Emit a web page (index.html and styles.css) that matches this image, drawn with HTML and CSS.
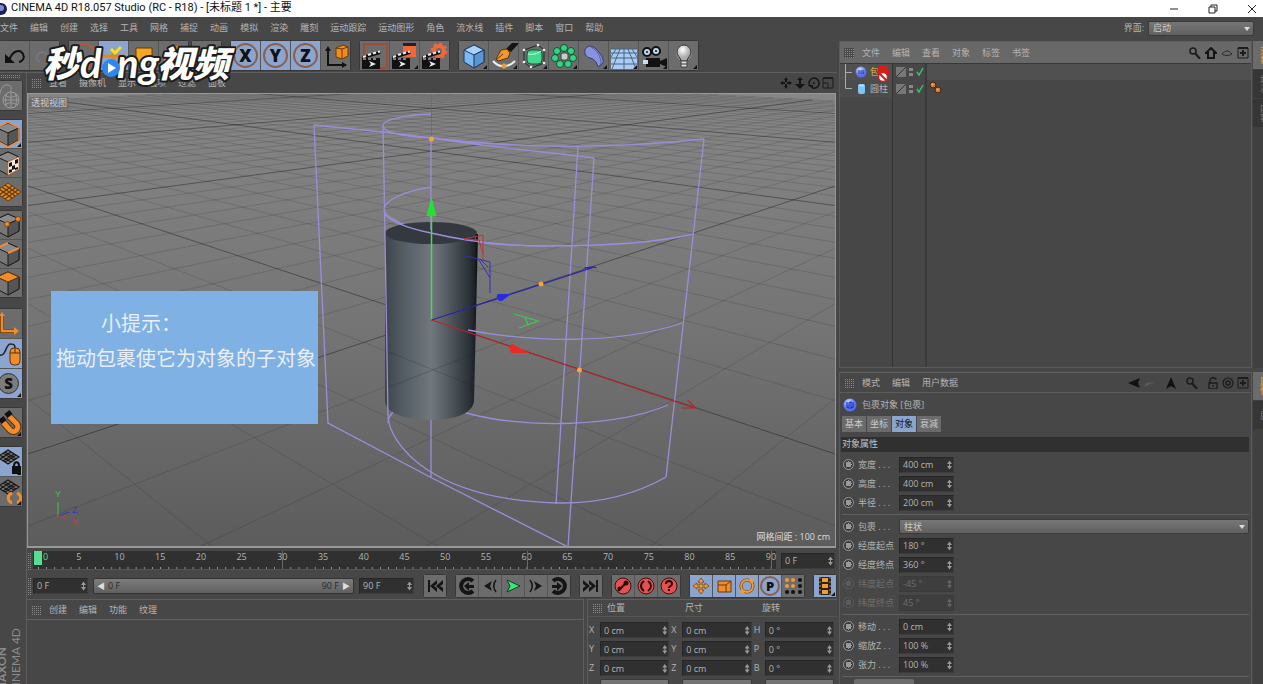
FILE: index.html
```html
<!DOCTYPE html>
<html lang="zh-CN">
<head>
<meta charset="utf-8">
<title>CINEMA 4D R18.057 Studio</title>
<link rel="stylesheet" href="styles.css">
</head>
<body>
<svg class="defs" aria-hidden="true">
  <defs>
    <g id="clap">
      <path d="M1 16h18v11H1z" fill="#111"/>
      <path d="M1 14 19 9l.5 3L2 17z" fill="#111"/>
      <path d="m2 15 3-1m2-1 3-1m2-.500 3-1m2-.500 2-.500" stroke="#eee" stroke-width="2"/>
      <path d="M2 17h3m2 0h3m2 0h3" stroke="#eee"/>
      <path d="m8 19 7 3-7 3 2-3z" fill="#eee"/>
    </g>
    <g id="graycube" stroke="#1c1c1c">
      <path d="m3 8 11-5 11 5v12l-11 6-11-6z" fill="#777"/>
      <path d="m3 8 11-5 11 5-11 5z" fill="#8a8a8a"/>
      <path d="m14 13 11-5v12l-11 6z" fill="#555"/>
    </g>
    <g id="mesh">
      <path d="M3 9 14 2l11 7-11 7z" fill="#777"/>
      <path d="M3 9 14 2l11 7-11 7zM6 7l11 7M9 5l11 7M11 4l11 7M6 11l11-7M9 13l11-7M11 14l11-7" stroke="#151515" stroke-width="1.200" fill="none"/>
    </g>
    <linearGradient id="backdrop" x1="0" y1="0" x2="0" y2="1">
      <stop offset="0" stop-color="#868686"/><stop offset=".5" stop-color="#757575"/><stop offset="1" stop-color="#5c5c5c"/>
    </linearGradient>
    <linearGradient id="steel">
      <stop offset="0" stop-color="#3c454c"/><stop offset=".15" stop-color="#4f585f"/><stop offset=".5" stop-color="#70787e"/><stop offset=".68" stop-color="#535b61"/><stop offset=".9" stop-color="#2b3238"/><stop offset=".96" stop-color="#1d2227"/><stop offset="1" stop-color="#0b0d0f"/>
    </linearGradient>
    <radialGradient id="ball" cx=".4" cy=".3"><stop offset="0" stop-color="#dbe3ff"/><stop offset="1" stop-color="#5670e6"/></radialGradient>
    <radialGradient id="bulb" cx=".4" cy=".3"><stop offset="0" stop-color="#fff"/><stop offset="1" stop-color="#aaa"/></radialGradient>
  </defs>
</svg>

<header class="titlebar">
  <svg class="app-icon" viewBox="0 0 8 12"><circle cx="1" cy="6" r="6" fill="#1d1f55"/><circle cx="1" cy="5" r="3" fill="#7d8bd8"/></svg>
  <h1>CINEMA 4D R18.057 Studio (RC - R18) - [未标题 1 *] - 主要</h1>
  <div class="window-buttons">
    <button aria-label="最小化"><svg viewBox="0 0 10 10"><path d="M1 5h8" stroke="#222"/></svg></button>
    <button aria-label="还原"><svg viewBox="0 0 10 10"><path d="M1 3h6v6H1zM3 3V1h6v6H7" stroke="#222" fill="none"/></svg></button>
    <button aria-label="关闭"><svg viewBox="0 0 10 10"><path d="m1 1 8 8M9 1 1 9" stroke="#222"/></svg></button>
  </div>
</header>

<nav class="menubar">
  <button>文件</button><button>编辑</button><button>创建</button><button>选择</button><button>工具</button><button>网格</button><button>捕捉</button><button>动画</button><button>模拟</button><button>渲染</button><button>雕刻</button><button>运动跟踪</button><button>运动图形</button><button>角色</button><button>流水线</button><button>插件</button><button>脚本</button><button>窗口</button><button>帮助</button>
  <div class="layout-choice"><label for="layout">界面:</label><span class="drop"><select id="layout"><option>启动</option></select></span></div>
</nav>

<main class="workspace">
  <section class="left">
    <div class="toolbar">
      <div class="group">
        <button aria-label="撤销"><svg viewBox="0 0 28 28"><path d="M8 19C11 8 19 7 22 12c2 4 0 7-4 8" fill="none" stroke="#111" stroke-width="2"/><path d="M4 12v9h10z" fill="#111"/></svg></button>
        <button aria-label="重做"><svg viewBox="0 0 28 28"><path d="M19 18C16 8 8 9 6 14c-1 3 0 5 3 6" fill="none" stroke="#777" stroke-width="2"/></svg></button>
      </div>
      <div class="group">
        <button aria-label="选择"><svg viewBox="0 0 28 28"><circle cx="14" cy="14" r="12" fill="none" stroke="#b4593a" stroke-width="2"/></svg></button>
        <button class="on" aria-label="移动"><svg viewBox="0 0 28 28"><path d="M14 8v18M2 14h24" stroke="#de8a20" stroke-width="3"/></svg></button>
        <button aria-label="缩放"><svg viewBox="0 0 28 28"><path d="M6 6h16v16H6z" fill="#f5a623" stroke="#703800"/></svg></button>
        <button aria-label="旋转"><svg viewBox="0 0 28 28"><circle cx="14" cy="14" r="9" fill="none" stroke="#de8a20" stroke-width="3"/></svg></button>
      </div>
      <div class="group tight">
        <button aria-label="最近工具"><svg viewBox="0 0 28 28"><path d="M14 4v20M4 14h20" stroke="#555" stroke-width="2"/></svg></button>
      </div>
      <div class="group">
        <button class="on axis" aria-label="X 轴"><span>X</span></button>
        <button class="on axis" aria-label="Y 轴"><span>Y</span></button>
        <button class="on axis" aria-label="Z 轴"><span>Z</span></button>
        <button aria-label="坐标系统"><svg viewBox="0 0 28 28"><path d="M6 8v15h15" fill="none" stroke="#111" stroke-width="2"/><path d="m6 4 3 5H3zM25 23l-5-3v6z" fill="#111"/><g stroke="#6d3900"><path d="m14 6 7-3 5 2v9l-6 3-6-2z" fill="#f08c1f"/><path d="m14 6 6 1 6-2M20 7v10" fill="none"/></g></svg></button>
      </div>
      <div class="group">
        <button aria-label="渲染视图"><svg viewBox="0 0 28 28"><path d="M3 2h23v24H3z" fill="none" stroke="#a04c35" stroke-width="2"/><use href="#clap"/></svg></button>
        <button class="more" aria-label="渲染到图片查看器"><svg viewBox="0 0 28 28"><path d="M12 3h13v12H12z" fill="#f0673d"/><path d="M12 1h13v3H12z" fill="#222"/><use href="#clap"/></svg></button>
        <button aria-label="渲染设置"><svg viewBox="0 0 28 28"><circle cx="18" cy="9" r="5" fill="none" stroke="#f0673d" stroke-width="4"/><circle cx="18" cy="9" r="7" fill="none" stroke="#f0673d" stroke-width="3" stroke-dasharray="2.750"/><use href="#clap"/></svg></button>
      </div>
      <div class="group">
        <button class="more" aria-label="立方体"><svg viewBox="0 0 28 28"><g stroke="#173a5c"><path d="m4 8 10-5 10 5v12l-10 6-10-6z" fill="#7db8ee"/><path d="m4 8 10-5 10 5-10 5z" fill="#a9d2fa"/><path d="m14 13 10-5v12l-10 6z" fill="#5a96d2"/></g></svg></button>
        <button class="more" aria-label="画笔"><svg viewBox="0 0 28 28"><path d="M16 7 22 1h7l-8 9z" fill="#151515"/><path d="m6 17 5-9 6-1 3 4-2 5-10 3z" fill="#f19a2b" stroke="#5a3205"/><path d="m6 18 7-6" stroke="#5a3205"/><path d="M3 19c6 7 15 7 22 0" fill="none" stroke="#eee" stroke-width="2"/><circle cx="14" cy="24" r="2.500" fill="#f19a2b"/></svg></button>
        <button class="more" aria-label="细分曲面"><svg viewBox="0 0 28 28"><path d="m4 8 14-5 6 5v13l-13 5-7-6z" fill="none" stroke="#222"/><rect x="7" y="8" width="15" height="14" rx="4" fill="#41d98c" stroke="#0f5a33"/><path d="M8 12c5 1 9 0 13-3" stroke="#d4ffe6" fill="none"/><g fill="#eee"><circle cx="4" cy="8" r="1.300"/><circle cx="18" cy="3" r="1.300"/><circle cx="24" cy="8" r="1.300"/><circle cx="24" cy="21" r="1.300"/><circle cx="11" cy="25" r="1.300"/><circle cx="4" cy="20" r="1.300"/></g></svg></button>
        <button class="more" aria-label="阵列"><svg viewBox="0 0 28 28"><g fill="#3bd184" stroke="#0d5730"><circle cx="14" cy="6" r="3.500"/><circle cx="21" cy="9" r="3.500"/><circle cx="23" cy="16" r="3.500"/><circle cx="18" cy="22" r="3.500"/><circle cx="10" cy="22" r="3.500"/><circle cx="5" cy="16" r="3.500"/><circle cx="7" cy="9" r="3.500"/></g><rect x="11" y="11" width="7" height="7" rx="2" fill="#ccc" stroke="#444"/></svg></button>
        <button class="more" aria-label="变形器"><svg viewBox="0 0 28 28"><path d="M5 8c2-5 7-5 11-1 5 5 8 10 7 14l-5 4c-2-7-5-8-8-9-4-1-6-4-5-8z" fill="#8793dd" stroke="#2d3670"/><path d="M11 5c7 4 10 10 10 17" fill="none" stroke="#535fb0"/></svg></button>
        <button class="more" aria-label="地面"><svg viewBox="0 0 28 28"><path d="M1 7h26v20H1z" fill="#a9cdf4"/><path d="M1 7h26M1 11h26M1 16h26M1 22h26M14 7v20M10 7 2 27M18 7l8 20M6 7l-5 8M22 7l5 8" stroke="#48637f"/></svg></button>
        <button class="more" aria-label="摄像机"><svg viewBox="0 0 28 28"><path d="M6 16h14v9H6zM20 19l7-3v9l-7-3z" fill="#111"/><g fill="#bcd7f4" stroke="#111" stroke-width="2"><circle cx="7" cy="10" r="4"/><circle cx="16" cy="9" r="4"/></g><circle cx="7" cy="10" r="1" fill="#111"/><circle cx="16" cy="9" r="1" fill="#111"/><path d="M3 18h5v4H3z" fill="#cde"/></svg></button>
        <button class="more" aria-label="灯光"><svg viewBox="0 0 28 28"><circle cx="14" cy="11" r="8" fill="#aaa" opacity=".5"/><path d="M11 19c0-3-4-5-4-9a7 7 0 0 1 14 0c0 4-4 6-4 9z" fill="url(#bulb)" stroke="#333"/><path d="M11 19h6v6h-6z" fill="#ddd" stroke="#444"/><path d="M11 22h6" stroke="#333"/></svg></button>
      </div>
    </div>

    <div class="stage">
      <aside class="palette">
        <i class="grip"></i>
        <div class="stack"><button class="dim" aria-label="转为可编辑"><svg viewBox="0 0 28 28"><g fill="none" stroke="#9a9a9a"><circle cx="17" cy="18" r="8"/><path d="M9 18h16M17 10v16M11 13c4 3 8 3 12 0M11 23c4-3 8-3 12 0M13 11c-2 5-2 10 0 14M21 11c2 5 2 10 0 14M5 20C5 8 9 2 14 3s3 6 2 7"/></g></svg></button></div>
        <div class="stack">
          <button class="on more" aria-label="模型"><svg viewBox="0 0 28 28"><use href="#graycube"/><path d="m3 8 11-6 11 6v13l-11 6-11-6z" fill="none" stroke="#f08c3c" stroke-width="1.500"/></svg></button>
          <button aria-label="纹理"><svg viewBox="0 0 28 28"><use href="#graycube"/><path d="m14 13 11-5v12l-11 6z" fill="#eee" stroke="#f08c3c"/><path d="m15 14 3-1v4l-3 1zM21 11l3-1v4l-3 1zM18 17l3-1v4l-3 1zM15 21l3-1v3l-3 1zM21 19l3-1v2l-3 1z" fill="#111"/></svg></button>
          <button aria-label="工作平面"><svg viewBox="0 0 28 28"><path d="m1 14 13-9 13 9-13 9z" fill="#e08a2b" stroke="#6b3b06"/><path d="m5 11 13 9M8 9l13 9M11 7l13 9M5 17l13-9M8 19l13-9M11 21l13-9" stroke="#6b3b06" stroke-width="1.500"/></svg></button>
        </div>
        <div class="stack">
          <button aria-label="点"><svg viewBox="0 0 28 28"><use href="#graycube"/><g fill="#f08c2c" stroke="#8a4a0c"><circle cx="13" cy="13" r="2.500"/><circle cx="24" cy="8" r="2.500"/></g></svg></button>
          <button aria-label="边"><svg viewBox="0 0 28 28"><use href="#graycube"/><path d="m14 13 11-5M3 8l11-5" stroke="#f08c3c" stroke-width="2"/></svg></button>
          <button aria-label="多边形"><svg viewBox="0 0 28 28"><use href="#graycube"/><path d="m3 8 11-5 11 5-11 5z" fill="#f08c2c" stroke="#6b3b06"/></svg></button>
        </div>
        <div class="stack">
          <button aria-label="启用轴心"><svg viewBox="0 0 28 28"><path d="M8 5v16h15" fill="none" stroke="#6b3b06" stroke-width="4"/><path d="M8 5v16h15" fill="none" stroke="#f08c2c" stroke-width="2.500"/><path d="m20 17 5 4-5 4zM5 6h6L8 2z" fill="#f08c2c"/></svg></button>
          <button class="on" aria-label="微调"><svg viewBox="0 0 28 28"><path d="M5 15c8 2 6-12 12-11 4 0 4 2 4 5" fill="none" stroke="#222" stroke-width="1.500"/><rect x="16" y="8" width="10" height="17" rx="4" fill="#f08c2c" stroke="#5a3205"/><path d="M16 13h10M21 8v5" stroke="#5a3205"/></svg></button>
          <button class="on more solo" aria-label="视窗独显"><span>S</span></button>
        </div>
        <div class="stack"><button class="more" aria-label="捕捉"><svg viewBox="0 0 28 28"><path d="m9 13 7 8c5 5 11-3 6-7l-7-7" fill="none" stroke="#5a3205" stroke-width="7"/><path d="m9 13 7 8c5 5 11-3 6-7l-7-7" fill="none" stroke="#f08c2c" stroke-width="5"/><path d="m6 13 5-4M12 7l5-4" stroke="#111" stroke-width="5"/></svg></button></div>
        <div class="stack">
          <button class="on more" aria-label="锁定工作平面"><svg viewBox="0 0 28 28"><use href="#mesh"/><path d="M18 18h9v8h-9z" fill="#111"/><path d="M20 18c0-5 5-5 5 0" fill="none" stroke="#111" stroke-width="2"/></svg></button>
          <button class="more" aria-label="对齐工作平面"><svg viewBox="0 0 28 28"><use href="#mesh"/><path d="M18 15c-5 2-5 8 0 10M23 15c5 2 5 8 0 10" fill="none" stroke="#f08c2c" stroke-width="3"/></svg></button>
        </div>
        <div class="brand"><b>MAXON</b><span>CINEMA 4D</span></div>
      </aside>

      <div class="center">
        <nav class="panel-menu view-menu">
          <i class="grip"></i><button>查看</button><button>摄像机</button><button>显示</button><button>选项</button><button>过滤</button><button>面板</button>
          <div class="tools">
            <svg viewBox="0 0 12 12"><path d="M6 0 8 3H4zM6 12l2-3H4zM0 6l3-2v4zM12 6 9 4v4zM5 3h2v2H5zM5 7h2v2H5zM3 5h2v2H3zM7 5h2v2H7z" fill="#151515"/></svg>
            <svg viewBox="0 0 12 12"><path d="m6 0 3 3H7v4h4l-5 5-5-5h4V3H3z" fill="#151515"/></svg>
            <svg viewBox="0 0 12 12"><path d="M2 9a5 5 0 1 1 3 2M6 5v2" fill="none" stroke="#151515" stroke-width="1.500"/><path d="M0 8h5v4z" fill="#151515"/></svg>
            <svg viewBox="0 0 12 12"><path d="M1 1h10v10H1zM1 6h5v5" fill="none" stroke="#1c1c1c"/><path d="M1 1h10" stroke="#1c1c1c" stroke-width="2"/></svg>
          </div>
        </nav>
        <div class="viewport">
          <svg class="scene" viewBox="27 94 809 452" preserveAspectRatio="xMidYMid slice">
            <rect x="-400" y="94" width="1700" height="452" fill="url(#backdrop)"/>
            <g fill="none" stroke="#000">
              <path id="grid-minor" stroke-opacity=".16" stroke-width=".8"/>
              <path id="grid-major" stroke-opacity=".4" stroke-width=".9"/>
            </g>
            <g fill="none" stroke="#9c8ddb" stroke-width="1.300">
              <path d="M431 187C405 191 384 200 384 210c2 12 60 36 162 36 60 0 110-3 147-12"/>
              <path d="M388 417c2 26 42 84 174 86 40 0 76-10 104-26"/>
              <path d="M431 411v66M394 411c-3 3-6 6-6 12"/>
            </g>
            <path d="M385 234v168c2 12 22 18 46 18s42-7 43-19l4-167z" fill="url(#steel)"/>
            <ellipse cx="431" cy="233" rx="46" ry="11" fill="#33393f"/>
            <path d="m389 352 84 34M476 353l-87 34" stroke="#222" stroke-opacity=".25"/>
            <g fill="none" stroke="#9c8ddb" stroke-width="1.300">
              <path d="M431 114c-26 1-50 6-48 12 2 8 28 11 48 12M314 125c40 4 80 8 117 13 60 9 105 13 163 20M431 138c100 12 190 10 273 1"/>
              <path d="m314 125 14 298 102 54 138 70 26-389M704 139l-38 338M578 146l-22 358M383 126l2 110 3 181M431 138v92"/>
              <path d="M384 212c2 8 22 16 47 21 34 8 70 13 115 13M468 330c60 12 150 15 214-7M466 413c60 16 150 14 202-8"/>
            </g>
            <path d="M431.500 94v44" stroke="#26952b" stroke-opacity=".7"/>
            <path d="M431.500 320V212" stroke="#4fd65a" stroke-width="1.500"/>
            <path d="m431.500 197 5 19h-10z" fill="#25df32"/>
            <path d="m431.500 320 163-53-10 1m10-1 2 1" stroke="#2925a4" stroke-width="1.300" fill="none"/>
            <path d="m511 294-13 0c-3 3 0 8 4 7z" fill="#2a2ae0"/>
            <path d="m431.500 320 263 88m-13 0 14 0-8-8" stroke="#b82427" stroke-width="1.200" fill="none"/>
            <path d="m529 353-17-9c-4 2-3 8 0 9z" fill="#ed2828"/>
            <path d="m464 239 19-4v25M464 239l15 1 4 14M475 236l1 5" stroke="#c63035" fill="none"/>
            <path d="m466 256 24 6v31M479 260l11 18M480 259l8 8" stroke="#3430b8" fill="none"/>
            <path d="m514 314 24 7-19 7M525 317l3 8" stroke="#43c94c" stroke-width="1.200" fill="none"/>
            <g fill="#f2a53a"><circle cx="431.500" cy="139" r="2.500"/><circle cx="541" cy="284" r="2.500"/><circle cx="579.500" cy="370" r="2.500"/></g>
            <path d="M58 516v-14" stroke="#3fc648"/><path d="m58 516 11-4" stroke="#3734c8"/><path d="m58 516 10 4" stroke="#c63c3c"/>
            <g class="gizmo"><text x="55" y="497" fill="#3fc648">Y</text><text x="72" y="513" fill="#3734c8">Z</text><text x="72" y="525" fill="#c63c3c">X</text></g>
          </svg>
          <span class="view-name">透视视图</span>
          <span class="spacing">网格间距 : 100 cm</span>
          <div class="tip"><p class="tip-head">小提示：</p><p>拖动包裹使它为对象的子对象</p></div>
        </div>

        <div class="timeline">
          <i class="grip"></i>
          <div class="ruler">
            <div class="marks"><span class="now">0</span><span>5</span><span>10</span><span>15</span><span>20</span><span>25</span><span class="major">30</span><span>35</span><span>40</span><span>45</span><span>50</span><span>55</span><span class="major">60</span><span>65</span><span>70</span><span>75</span><span>80</span><span>85</span><span class="major">90</span></div>
          </div>
          <span class="num"><input aria-label="当前帧" value="0 F"></span>
        </div>

        <div class="transport">
          <i class="grip"></i>
          <span class="num"><input aria-label="起始帧" value="0 F"></span>
          <div class="range"><button>◀</button><span>0 F</span><span class="end">90 F</span><button>▶</button></div>
          <span class="num"><input aria-label="结束帧" value="90 F"></span>
          <div class="group small"><button aria-label="转到开始"><svg viewBox="0 0 22 22"><path d="M4 5h2v12H4zM13 5v4l-3 2 3 2v4l-7-6zM19 5v4l-3 2 3 2v4l-7-6z" fill="#151515"/></svg></button></div>
          <div class="group small">
            <button aria-label="上一关键帧"><svg viewBox="0 0 22 22"><path d="M17 6a7 7 0 1 0 0 10" fill="none" stroke="#151515" stroke-width="4"/><path d="m8 11 5-4v3h5v3h-5v3z" fill="#151515"/></svg></button>
            <button aria-label="上一帧"><svg viewBox="0 0 22 22"><path d="m13 6-2 5 2 5-8-5z" fill="#151515"/><path d="M17 5c-3 4-3 8 0 12" fill="none" stroke="#151515" stroke-width="1.500"/></svg></button>
            <button aria-label="播放"><svg viewBox="0 0 22 22"><path d="m5 5 13 6-13 6 3-6z" fill="#36e67c" stroke="#0b3d1e"/></svg></button>
            <button aria-label="下一帧"><svg viewBox="0 0 22 22"><path d="m9 6 2 5-2 5 8-5z" fill="#151515"/><path d="M5 5c3 4 3 8 0 12" fill="none" stroke="#151515" stroke-width="1.500"/></svg></button>
            <button aria-label="下一关键帧"><svg viewBox="0 0 22 22"><path d="M5 6a7 7 0 1 1 0 10" fill="none" stroke="#151515" stroke-width="4"/><path d="M14 11 9 7v3H4v3h5v3z" fill="#151515"/></svg></button>
          </div>
          <div class="group small"><button aria-label="转到结束"><svg viewBox="0 0 22 22"><path d="M16 5h2v12h-2zM9 5v4l3 2-3 2v4l7-6zM3 5v4l3 2-3 2v4l7-6z" fill="#151515"/></svg></button></div>
          <div class="group small">
            <button aria-label="记录关键帧"><svg viewBox="0 0 22 22"><circle cx="11" cy="11" r="8" fill="#e35151" stroke="#3b1010"/><path d="m6 16 8-8" stroke="#2b0808" stroke-width="2"/><circle cx="14" cy="8" r="2.500" fill="#2b0808"/><circle cx="7.500" cy="13.500" r="2" fill="#2b0808"/></svg></button>
            <button aria-label="自动关键帧"><svg viewBox="0 0 22 22"><circle cx="11" cy="11" r="8" fill="#e35151" stroke="#3b1010"/><path d="M9 6c-4 3-4 7 0 10M13 6c4 3 4 7 0 10" stroke="#2b0808" stroke-width="2" fill="none"/></svg></button>
            <button aria-label="关键帧选集"><svg viewBox="0 0 22 22"><circle cx="11" cy="11" r="8" fill="#e35151" stroke="#3b1010"/><path d="M8 9c0-4 6-4 6 0 0 2-3 2-3 4m0 1v2" stroke="#2b0808" stroke-width="2" fill="none"/></svg></button>
          </div>
          <div class="group small">
            <button class="on" aria-label="位置"><svg viewBox="0 0 22 22"><path d="m11 3 3 4h-2v3h3V8l4 3-4 3v-2h-3v3h2l-3 4-3-4h2v-3H7v2l-4-3 4-3v2h3V7H8z" fill="#f29b36" stroke="#6b3b06" stroke-width=".7"/></svg></button>
            <button class="on" aria-label="缩放"><svg viewBox="0 0 22 22"><path d="M5 6h13v11H5z" fill="#f08c2c" stroke="#6b3b06"/><path d="M5 10h8v7M13 10l5-4" stroke="#6b3b06" fill="none"/></svg></button>
            <button class="on" aria-label="旋转"><svg viewBox="0 0 22 22"><circle cx="11" cy="11" r="6" fill="none" stroke="#6b3b06" stroke-width="3"/><circle cx="11" cy="11" r="6" fill="none" stroke="#f29b36" stroke-width="1.800"/><path d="m13 3 5 1-2 5zM9 19l-5-1 2-5z" fill="#f29b36"/></svg></button>
            <button class="on axis" aria-label="参数"><span>P</span></button>
            <button aria-label="点级别"><svg viewBox="0 0 22 22"><g fill="#f29b36"><circle cx="5" cy="5" r="2"/><circle cx="11" cy="5" r="2"/><circle cx="5" cy="11" r="2"/><circle cx="11" cy="11" r="2"/></g><g fill="#111"><circle cx="18" cy="5" r="2"/><circle cx="18" cy="11" r="2"/><circle cx="5" cy="17" r="2"/><circle cx="11" cy="17" r="2"/><circle cx="18" cy="17" r="2"/></g></svg></button>
          </div>
          <div class="group small"><button class="on more" aria-label="时间线"><svg viewBox="0 0 22 22"><path d="M5 2h12v18H5z" fill="#2b2115"/><path d="M8 3h6v4H8zM8 9h6v4H8zM8 15h6v4H8z" fill="#f29b36"/><path d="M6 2v18M16 2v18" stroke="#9a8872" stroke-dasharray="2 2"/></svg></button></div>
        </div>

        <div class="lower">
          <section class="materials">
            <nav class="panel-menu"><i class="grip"></i><button>创建</button><button>编辑</button><button>功能</button><button>纹理</button></nav>
          </section>
          <section class="coords">
            <div class="coords-head"><i class="grip"></i><span>位置</span><span>尺寸</span><span>旋转</span></div>
            <div class="coords-grid">
              <label for="px">X</label><span class="num"><input id="px" value="0 cm"></span><label for="sx">X</label><span class="num"><input id="sx" value="0 cm"></span><label for="rh">H</label><span class="num"><input id="rh" value="0 °"></span>
              <label for="py">Y</label><span class="num"><input id="py" value="0 cm"></span><label for="sy">Y</label><span class="num"><input id="sy" value="0 cm"></span><label for="rp">P</label><span class="num"><input id="rp" value="0 °"></span>
              <label for="pz">Z</label><span class="num"><input id="pz" value="0 cm"></span><label for="sz">Z</label><span class="num"><input id="sz" value="0 cm"></span><label for="rb">B</label><span class="num"><input id="rb" value="0 °"></span>
              <i></i><span class="drop"></span><i></i><span class="drop"></span><i></i><span class="drop"></span>
            </div>
          </section>
        </div>
      </div>
    </div>
  </section>

  <section class="right">
    <div class="dock objects">
      <div class="panel">
        <nav class="panel-menu bright">
          <i class="grip"></i><button>文件</button><button>编辑</button><button>查看</button><button>对象</button><button>标签</button><button>书签</button>
          <div class="tools">
            <svg viewBox="0 0 12 12"><circle cx="4" cy="4" r="3" fill="none" stroke="#1c1c1c" stroke-width="1.500"/><path d="m6 6 5 6" stroke="#1c1c1c" stroke-width="2"/></svg>
            <svg viewBox="0 0 12 12"><path d="M6 1 1 6h2v5h6V6h2z" fill="none" stroke="#151515" stroke-width="2"/></svg>
            <svg viewBox="0 0 12 12"><path d="M1 7c3-4 7-4 10 0-3 2-7 2-10 0z" fill="none" stroke="#2b2b2b"/></svg>
            <svg viewBox="0 0 12 12"><path d="M1 1h10v10H1z" fill="none" stroke="#1c1c1c"/><path d="M1 1h10M6 3v6M3 6h6" stroke="#1c1c1c" stroke-width="2"/></svg>
          </div>
        </nav>
        <div class="tree">
          <div class="row lit">
            <div class="name"><svg class="branch" viewBox="0 0 12 17"><path d="M5.500 0v17M6 8.500h6" stroke="#aaa" fill="none"/></svg><svg class="kind" viewBox="0 0 12 12"><circle cx="6" cy="6" r="5.500" fill="url(#ball)"/><path d="M4 4v4M6 4v4M8 4v4" stroke="#1b2c9b"/></svg><span class="picked">包裹</span>
              <svg class="deny" viewBox="0 0 14 18"><ellipse cx="7" cy="7" rx="6" ry="7" fill="#d81b1b"/><circle cx="7" cy="12" r="4.500" fill="#fff" stroke="#d81b1b" stroke-width="1.500"/><path d="m4 9 6 6" stroke="#d81b1b" stroke-width="2"/></svg></div>
            <div class="flags"><i class="layer"></i><i class="dots"></i><svg viewBox="0 0 8 10"><path d="m1 5 2 3 4-7" stroke="#35c36b" stroke-width="1.500" fill="none"/></svg></div>
            <div class="tags"></div>
          </div>
          <div class="row">
            <div class="name"><svg class="branch" viewBox="0 0 12 17"><path d="M5.500 0v8.500H12" stroke="#aaa" fill="none"/></svg><svg class="kind" viewBox="0 0 12 12"><rect x="3" y="1" width="7" height="10" rx="2" fill="#7cc4f5"/><ellipse cx="6.500" cy="2.500" rx="3" ry="1" fill="#b9e0fb"/></svg><span>圆柱</span></div>
            <div class="flags"><i class="layer"></i><i class="dots"></i><svg viewBox="0 0 8 10"><path d="m1 5 2 3 4-7" stroke="#35c36b" stroke-width="1.500" fill="none"/></svg></div>
            <div class="tags"><svg viewBox="0 0 14 14"><circle cx="4" cy="4" r="3" fill="#c87a35" stroke="#43260c"/><circle cx="9" cy="9" r="3" fill="#c87a35" stroke="#43260c"/><circle cx="3.500" cy="3.500" r="1" fill="#f0b880"/><circle cx="8.500" cy="8.500" r="1" fill="#f0b880"/></svg></div>
          </div>
          <div class="row rest"><div class="name"></div><div class="flags"></div><div class="tags"></div></div>
        </div>
      </div>
      <div class="tabs"><button class="current">对象</button><button>场次</button><button>内容</button></div>
    </div>

    <div class="dock attributes">
      <div class="panel">
        <nav class="panel-menu">
          <i class="grip"></i><button>模式</button><button>编辑</button><button>用户数据</button>
          <div class="tools">
            <svg class="wide" viewBox="0 0 28 12"><path d="m0 6 12-5-2 5 2 5z" fill="#111"/><path d="m16 10 11-5-9 1z" fill="#5c5c5c"/></svg>
            <svg class="apart" viewBox="0 0 12 12"><path d="m6 0 5 12-5-3-5 3z" fill="#111"/></svg>
            <svg class="apart" viewBox="0 0 12 12"><circle cx="4" cy="4" r="3" fill="none" stroke="#1c1c1c" stroke-width="1.500"/><path d="m6 6 5 6" stroke="#1c1c1c" stroke-width="2"/></svg>
            <svg class="apart" viewBox="0 0 12 12"><path d="M2 6h8v6H2zM3 6V3c0-3 6-3 6 0M6 8v2" fill="none" stroke="#1c1c1c" stroke-width="1.300"/></svg>
            <svg viewBox="0 0 12 12"><circle cx="6" cy="6" r="5" fill="none" stroke="#1c1c1c" stroke-width="1.200"/><circle cx="6" cy="6" r="2" fill="none" stroke="#1c1c1c" stroke-width="1.500"/></svg>
            <svg viewBox="0 0 12 12"><path d="M1 1h10v10H1z" fill="none" stroke="#1c1c1c"/><path d="M1 1h10M6 3v6M3 6h6" stroke="#1c1c1c" stroke-width="2"/></svg>
          </div>
        </nav>
        <div class="attr-title"><svg viewBox="0 0 14 14"><circle cx="7" cy="7" r="6.500" fill="url(#ball)"/><path d="M4 4v5l2 1V5l2-1v6l2-1V4" stroke="#1b35d0" stroke-width="1.300" fill="none"/></svg><span>包裹对象 [包裹]</span></div>
        <div class="attr-tabs"><button>基本</button><button>坐标</button><button class="on">对象</button><button>衰减</button></div>
        <h2>对象属性</h2>
        <div class="fields">
          <div class="field"><input type="radio" aria-label="宽度关键帧"><label for="w">宽度 . . .</label><span class="num"><input id="w" value="400 cm"></span></div>
          <div class="field"><input type="radio" aria-label="高度关键帧"><label for="h">高度 . . .</label><span class="num"><input id="h" value="400 cm"></span></div>
          <div class="field"><input type="radio" aria-label="半径关键帧"><label for="r">半径 . . .</label><span class="num"><input id="r" value="200 cm"></span></div>
          <hr>
          <div class="field"><input type="radio" aria-label="包裹关键帧"><label for="wrap">包裹 . . .</label><span class="drop"><select id="wrap"><option>柱状</option></select></span></div>
          <div class="field"><input type="radio" aria-label="经度起点关键帧"><label for="lo1">经度起点</label><span class="num"><input id="lo1" value="180 °"></span></div>
          <div class="field"><input type="radio" aria-label="经度终点关键帧"><label for="lo2">经度终点</label><span class="num"><input id="lo2" value="360 °"></span></div>
          <div class="field off"><input type="radio" disabled aria-label="纬度起点关键帧"><label for="la1">纬度起点</label><span class="num"><input id="la1" value="-45 °" disabled></span></div>
          <div class="field off"><input type="radio" disabled aria-label="纬度终点关键帧"><label for="la2">纬度终点</label><span class="num"><input id="la2" value="45 °" disabled></span></div>
          <hr>
          <div class="field"><input type="radio" aria-label="移动关键帧"><label for="mv">移动 . . .</label><span class="num"><input id="mv" value="0 cm"></span></div>
          <div class="field"><input type="radio" aria-label="缩放Z关键帧"><label for="zz">缩放Z . .</label><span class="num"><input id="zz" value="100 %"></span></div>
          <div class="field"><input type="radio" aria-label="张力关键帧"><label for="tn">张力 . . .</label><span class="num"><input id="tn" value="100 %"></span></div>
          <hr>
          <button class="fit" aria-label="匹配到父级"></button>
        </div>
      </div>
      <div class="tabs"><button class="current">属性</button><button>层</button></div>
    </div>
  </section>
</main>

<svg class="watermark" viewBox="0 0 196 52" role="img" aria-label="秒dong视频">
  <g class="wm-text">
    <text class="wm-han" x="3" y="34">秒</text>
    <text class="wm-latin" x="40" y="35">d</text>
    <text class="wm-latin" x="77" y="35">ng</text>
    <text class="wm-han" x="117" y="34">视频</text>
  </g>
  <circle cx="71" cy="25" r="9" fill="#2f86ee"/>
  <path d="m68 20 8 5-8 5z" fill="#fff"/>
  <path d="m71 6 4 4 6-6" fill="none" stroke="#f6e11c" stroke-width="3"/>
</svg>
<script src="grid.js"></script>
</body>
</html>
```
FILE: grid.js
```js
// Ground plane in perspective: a runs along the red axis, b along the blue one, one unit per 100 cm.
const CENTER = 431.5, HORIZON = 36, DEPTH = 6.824, RISE = 1938, SPREAD = 855.5, FAR = 37, NEAR = 0.6;

const depth = (a, b) => DEPTH - (a - b) / 2;

function project(a, b) {
  const w = depth(a, b);
  return (CENTER + SPREAD * (a + b) / 2 / w).toFixed(1) + ' ' + (HORIZON + RISE / w).toFixed(1);
}

const paths = { minor: '', major: '' };
for (let n = -FAR; n <= FAR; n++) {
  const kind = n % 10 === 0 ? 'major' : 'minor';
  const aEnd = Math.min(FAR, 2 * (DEPTH - NEAR) + n);
  if (aEnd > -FAR) paths[kind] += `M${project(-FAR, n)}L${project(aEnd, n)}`;
  const bStart = Math.max(-FAR, n - 2 * (DEPTH - NEAR));
  if (bStart < FAR) paths[kind] += `M${project(n, bStart)}L${project(n, FAR)}`;
}
document.getElementById('grid-minor').setAttribute('d', paths.minor);
document.getElementById('grid-major').setAttribute('d', paths.major);
```
FILE: styles.css
```css
* { box-sizing: border-box; }
html, body { height: 100%; }
body {
  margin: 0; display: flex; flex-direction: column; overflow: hidden;
  background: #474747; color: #b4b4b4;
  font: 9px/12px "Open Sans", "Noto Sans CJK SC", sans-serif;
}
button, input, select { font: inherit; color: inherit; border: 0; padding: 0; margin: 0; background: none; }
svg { display: block; flex: none; }
.defs { position: absolute; width: 0; height: 0; }
p, h1, h2 { margin: 0; font-weight: 400; }

.titlebar { flex: none; display: flex; align-items: center; height: 17px; background: #fff; color: #111; }
.app-icon { width: 8px; height: 12px; margin-right: 3px; }
.titlebar h1 { font: 11px/14px Roboto, "Noto Sans CJK SC", sans-serif; padding-bottom: 1px; }
.window-buttons { margin-left: auto; display: flex; gap: 29px; padding-right: 6px; }
.window-buttons button, .window-buttons svg { width: 10px; height: 10px; }

.menubar { flex: none; display: flex; align-items: center; gap: 12px; height: 22px; padding-right: 9px; }
.menubar button { white-space: nowrap; }
.layout-choice { margin-left: auto; display: flex; align-items: center; gap: 4px; }
.layout-choice .drop { width: 106px; }

.drop { position: relative; display: block; height: 15px; border-radius: 2px; background: linear-gradient(#777, #606060); border: 1px solid #3a3a3a; }
.drop select { appearance: none; display: block; width: 100%; height: 13px; padding-left: 4px; line-height: 12px; color: #ccc; }
.drop:has(select)::after { content: ""; position: absolute; right: 3px; top: 5px; border: 3px solid transparent; border-top: 4px solid #ddd; border-bottom: 0; }

.workspace { flex: 1; min-height: 0; display: flex; gap: 2px; }
.left { flex: 1; min-width: 0; display: flex; flex-direction: column; }
.right { flex: 0 0 424px; display: flex; flex-direction: column; gap: 4px; padding-top: 2px; }

.toolbar { flex: none; display: flex; gap: 10px; height: 34px; padding-top: 2px; border-bottom: 1px solid #5e5e5e; }
.group { display: flex; gap: 1px; height: 29px; background: #555; border-radius: 3px; box-shadow: 0 0 0 1px #383838; }
.group.tight { margin-left: -6px; }
.group button { position: relative; width: 29px; background: #6c6c6c; display: flex; align-items: center; justify-content: center; }
.group svg { width: 28px; height: 28px; }
.group button.on, .stack button.on { background: #8ca5cf; }
.more::after { content: ""; position: absolute; right: 1px; bottom: 1px; border: 2px solid; border-color: transparent #111 #111 transparent; }
.axis span { display: block; width: 25px; height: 25px; border: 2px solid #8c5f4b; border-radius: 50%; color: #111; font: 800 17px/21px "Open Sans", sans-serif; }

.group.small { height: 22px; }
.group.small button { width: 22px; }
.group.small svg { width: 22px; height: 22px; }
.small .axis span { width: 20px; height: 20px; font-size: 13px; line-height: 16px; }

.stage { flex: 1; min-height: 0; display: flex; }
.palette { flex: 0 0 26px; display: flex; flex-direction: column; overflow: hidden; position: relative; }
.palette > .grip { width: 20px; height: 4px; margin: 1px 0 3px; }
.stack { flex: none; width: 22px; display: flex; flex-direction: column; gap: 1px; margin-bottom: 10px; background: #555; box-shadow: 0 0 0 1px #383838; border-radius: 0 3px 3px 0; }
.stack:nth-of-type(2) { margin-bottom: 5px; }
.stack:nth-of-type(3) { margin-bottom: 12px; }
.stack button { position: relative; height: 29px; overflow: hidden; background: #6c6c6c; display: flex; justify-content: flex-end; align-items: center; }
.stack:nth-of-type(2) button, .stack:nth-of-type(3) button { height: 28px; }
.stack svg { width: 28px; height: 28px; }
.solo span { flex: none; width: 21px; height: 21px; margin-right: 3px; border-radius: 50%; border: 1px solid #333; background: #7c7c7c; color: #111; font: 800 15px/19px "Open Sans", sans-serif; }
.brand { position: absolute; left: 0; bottom: 0; display: flex; align-items: flex-end; height: 57px; color: #8b8b8b; }
.brand b, .brand span { writing-mode: vertical-rl; transform: rotate(180deg); white-space: nowrap; font: 700 12px/12px Lato, sans-serif; margin-bottom: -9px; }
.brand b { margin-left: -4px; }
.brand span { font-weight: 400; margin-left: 2px; }

.grip { flex: none; width: 10px; height: 10px; background: repeating-linear-gradient(#474747 0 1px, transparent 1px 2px), repeating-linear-gradient(90deg, #474747 0 1px, #8a8a8a 1px 2px); }

.center { flex: 1; min-width: 0; display: flex; flex-direction: column; border-left: 1px solid #5c5c5c; }
.panel-menu { flex: none; display: flex; align-items: center; gap: 12px; height: 20px; padding-left: 4px; }
.panel-menu .grip { margin-right: -4px; }
.panel-menu button { white-space: nowrap; }
.tools { margin-left: auto; display: flex; gap: 4px; padding-right: 2px; }
.tools svg { width: 12px; height: 12px; }
.view-menu .tools { gap: 2px; padding-right: 3px; }

.viewport { flex: 1; min-height: 0; position: relative; overflow: hidden; margin-right: 1px; border: 1px solid #989898; border-bottom-width: 2px; }
.scene { position: absolute; inset: 0; width: 100%; height: 100%; }
.gizmo { font: 9px "Liberation Sans", sans-serif; }
.view-name, .spacing { position: absolute; padding: 0 2px; background: #5e5e5eb0; color: #ddd; }
.view-name { left: 1px; top: 3px; background: #66666699; color: #cfcfcf; }
.spacing { right: 3px; bottom: 3px; }
.tip { position: absolute; left: 23px; top: 197px; width: 267px; height: 133px; padding: 14px 0 0 5px; background: #7fb1e5; color: #e9eff6; font: 700 20px/35px "Noto Sans CJK SC", sans-serif; white-space: nowrap; }
.tip-head { padding-left: 45px; }

.timeline { flex: none; display: flex; align-items: center; height: 25px; padding: 1px 2px 1px 0; }
.timeline > .grip, .transport > .grip { width: 5px; height: 18px; margin-right: 1px; }
.ruler { flex: 1; height: 19px; background: #303030; padding: 0 5px; border-bottom: 1px solid #555; }
.marks { position: relative; height: 18px; display: flex; justify-content: space-between; background: linear-gradient(90deg, #999 1px, transparent 1px) 0 100% / calc(100% / 90) 2px repeat-x; }
.marks span { position: relative; width: 0; display: flex; justify-content: center; }
.marks .now { color: #4fdf8b; justify-content: flex-start; text-indent: 5px; }
.marks .now::before { content: ""; position: absolute; left: -4px; top: 0; width: 8px; height: 14px; background: #55df90; }
.marks .major::after { content: ""; position: absolute; top: 0; left: 0; width: 1px; height: 18px; background: #6a6a6a; }
.timeline .num { width: 54px; margin-left: 5px; }

.num { position: relative; display: block; height: 16px; background: #303030; border: 1px solid #3c3c3c; border-top-color: #262626; border-left-color: #262626; }
.num input { display: block; width: 100%; height: 14px; padding-left: 3px; outline: 0; }
.num::after { content: ""; position: absolute; right: 1px; top: 3px; width: 5px; height: 9px; background: #999; clip-path: polygon(50% 0, 100% 38%, 60% 38%, 60% 62%, 100% 62%, 50% 100%, 0 62%, 40% 62%, 40% 38%, 0 38%); }

.transport { flex: none; display: flex; align-items: center; height: 25px; gap: 10px; padding-right: 1px; }
.transport > .grip { margin-right: -9px; }
.transport .num { width: 55px; flex: none; }
.transport .range { flex: 1; min-width: 0; display: flex; align-items: center; gap: 3px; height: 16px; margin: 0 -5px; padding: 0 3px; background: linear-gradient(#7c7c7c, #606060); border: 1px solid #333; border-radius: 2px; color: #2a2a2a; }
.range button { color: #ddd; font-size: 8px; }
.range .end { margin-left: auto; }

.lower { flex: none; display: flex; gap: 3px; height: 86px; overflow: hidden; padding-top: 1px; }
.materials { flex: 1; border-top: 1px solid #5e5e5e; border-right: 1px solid #5e5e5e; }
.materials .panel-menu { border-bottom: 1px solid #606060; }
.coords { flex: 0 0 250px; border-top: 1px solid #5e5e5e; border-left: 1px solid #5e5e5e; }
.coords-head { display: grid; grid-template-columns: 15px 78px 77px 1fr; align-items: center; height: 17px; padding-left: 4px; border-bottom: 1px solid #555; }
.coords-grid { display: grid; grid-template-columns: 9px 1fr 9px 1fr 9px 1fr; column-gap: 2px; row-gap: 3px; align-items: center; padding: 5px 3px 0 1px; }

.dock { display: flex; gap: 1px; min-height: 0; }
.objects { flex: 0 0 327px; }
.attributes { flex: 1; }
.panel { flex: 1; min-width: 0; display: flex; flex-direction: column; border: 1px solid #5a5a5a; border-top-color: #606060; overflow: hidden; }
.panel > * { flex: none; }
.attributes .panel { border-bottom: 0; }
.bright { background: #686868; height: 21px; }
.attributes .panel-menu { border-bottom: 1px solid #5c5c5c; }
.tools .wide { width: 28px; }
.attributes .tools { gap: 3px; }
.tools .apart { margin-left: 6px; }

.panel > .tree { flex: 1; display: flex; flex-direction: column; border-top: 1px solid #383838; }
.row { display: flex; height: 17px; }
.row.lit { height: 16px; }
.row.lit .name, .row.lit .tags { background: #505050; }
.row.rest { flex: 1; }
.name { position: relative; flex: 0 0 52px; display: flex; align-items: center; gap: 2px; background: #4c4c4c; white-space: nowrap; }
.rest .name { background: none; }
.branch { width: 12px; height: 17px; }
.kind { width: 12px; height: 12px; margin-left: 1px; }
.name span { margin-left: 1px; }
.picked { color: #e8c23c; }
.deny { position: absolute; left: 36px; top: 1px; width: 14px; height: 18px; z-index: 1; }
.flags { flex: 0 0 35px; display: flex; align-items: center; gap: 3px; padding-left: 3px; border-left: 1px solid #333; border-right: 2px solid #3a3a3a; }
.flags svg { width: 8px; height: 10px; }
.layer { flex: none; width: 10px; height: 10px; background: linear-gradient(135deg, #777 46%, #333 46% 54%, #777 54%); }
.dots { flex: none; width: 4px; height: 10px; background: radial-gradient(circle, #888 2px, transparent 2px) 0 0 / 4px 5px; }
.tags { flex: 1; padding: 1px 0 0 2px; }
.tags svg { width: 14px; height: 14px; }

.tabs { flex: 0 0 10px; display: flex; flex-direction: column; gap: 1px; overflow: hidden; background: #404040; }
.tabs button { writing-mode: vertical-rl; flex: none; height: 28px; width: 22px; overflow: hidden; background: #363636; color: #777; display: flex; align-items: center; justify-content: center; }
.tabs .current { background: #6b6b6b; color: #f0a52b; }

.attr-title { display: flex; align-items: center; gap: 5px; height: 23px; padding-left: 3px; }
.attr-title svg { width: 14px; height: 14px; }
.attr-tabs { display: flex; gap: 1px; padding-left: 2px; }
.attr-tabs button { width: 24px; height: 16px; background: #6b6b6b; color: #ccc; }
.attr-tabs .on { background: #8ca5cf; color: #111; }
.panel h2 { margin: 5px 2px 3px 1px; height: 15px; padding-left: 1px; background: #303030; color: #c0c0c0; font-size: 9px; line-height: 14px; }
.fields { padding: 0 2px; }
.field { display: flex; align-items: center; height: 19px; }
.field > input { appearance: none; flex: none; width: 11px; height: 11px; margin: 0 4px 0 1px; border: 1px solid #999; border-radius: 50%; background: radial-gradient(circle, #999 3px, #3a3a3a 3px); }
.field label { flex: 0 0 41px; white-space: nowrap; }
.field .num { width: 55px; }
.field .drop { flex: 1; }
.field.off { color: #6e6e6e; }
.off > input { opacity: .25; }
.off .num { background: #3e3e3e; border-color: #3a3a3a; }
.off .num::after { opacity: .4; }
.fields hr { margin: 2px 0; border: 0; border-top: 1px solid #606060; }
.fit { display: block; width: 60px; height: 15px; margin-left: 12px; border-radius: 2px; background: #6c6c6c; }

.watermark { position: absolute; left: 40px; top: 43px; width: 196px; height: 52px; }
.wm-text { fill: #fff; stroke: #1c1c1c; stroke-width: 4px; stroke-linejoin: round; paint-order: stroke; font-style: italic; }
.wm-han { font: italic 900 36px "Noto Sans CJK SC", sans-serif; }
.wm-latin { font: italic 700 40px Lato, sans-serif; }
```
